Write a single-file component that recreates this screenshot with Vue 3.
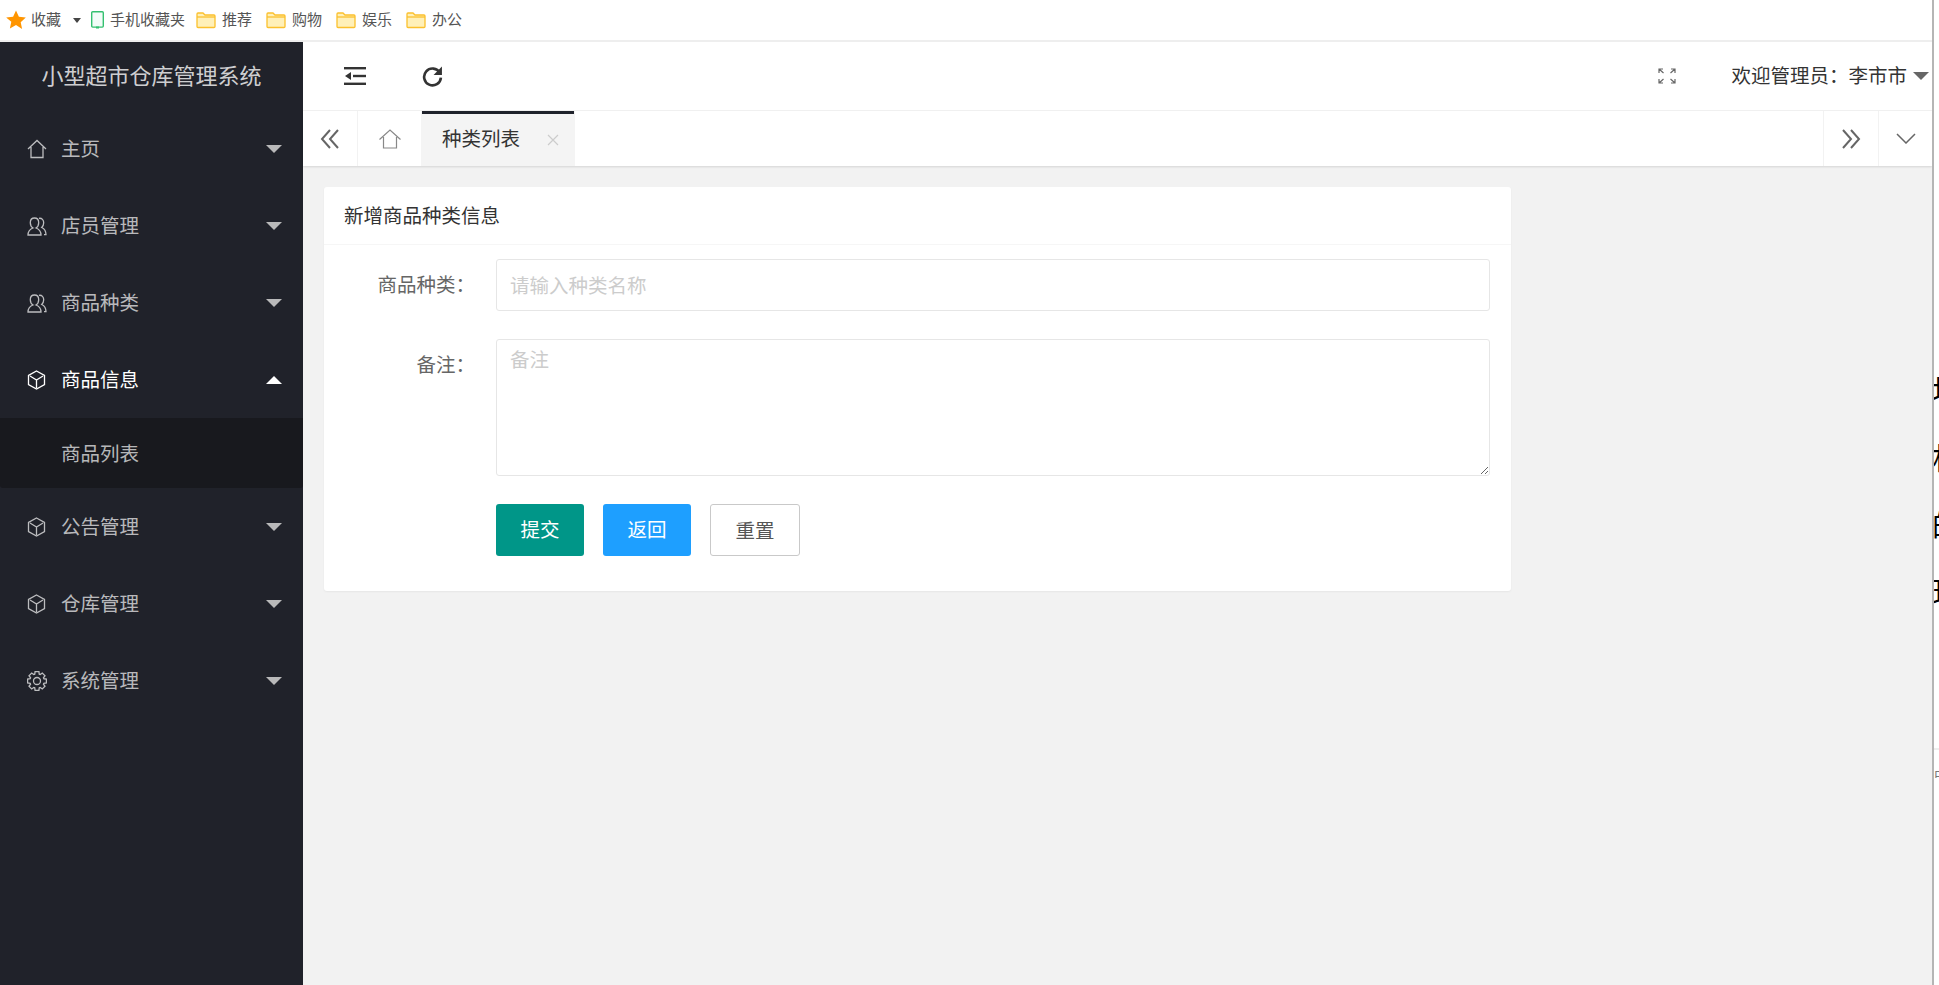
<script setup>
const bookmarks = ['推荐', '购物', '娱乐', '办公']
const menu = [
  { label: '主页', icon: 'home' },
  { label: '店员管理', icon: 'user' },
  { label: '商品种类', icon: 'user' },
  { label: '商品信息', icon: 'cube', open: true, sub: '商品列表' },
  { label: '公告管理', icon: 'cube' },
  { label: '仓库管理', icon: 'cube' },
  { label: '系统管理', icon: 'gear' }
]
const gearPoints = (() => {
  const pts = []
  for (let i = 0; i < 8; i++) {
    const a = (i * Math.PI) / 4
    for (const [d, r] of [[-0.32, 7.2], [-0.2, 9.6], [0.2, 9.6], [0.32, 7.2]]) {
      pts.push(`${(10 + r * Math.cos(a + d)).toFixed(2)},${(10 + r * Math.sin(a + d)).toFixed(2)}`)
    }
  }
  return pts.join(' ')
})()
const sliver = ['块', '相', '的', '现']
</script>

<template>
  <div class="screen">
    <div class="window">
      <div class="bookmarks">
        <svg class="star" viewBox="0 0 20 20"><path d="M10 0.5l2.9 6.3 6.9.8-5.1 4.7 1.4 6.8L10 15l-6.1 3.6 1.4-6.8L.2 7.6l6.9-.8z" fill="#ff9500"/></svg>
        <span class="bm-text bm-first">收藏</span>
        <i class="bm-caret"></i>
        <svg class="phone" viewBox="0 0 13 18"><rect x="0.7" y="0.7" width="11.6" height="15.4" rx="1" fill="#f2fcf8" stroke="#34c070" stroke-width="1.4"/><rect x="5" y="15.5" width="3" height="2" fill="#34c070"/></svg>
        <span class="bm-text">手机收藏夹</span>
        <span v-for="b in bookmarks" :key="b" class="bm-folder">
          <svg class="folder" viewBox="0 0 20 18"><path d="M1 3a1 1 0 0 1 1-1h5l2 2h9a1 1 0 0 1 1 1v10.500a1 1 0 0 1-1 1H2a1 1 0 0 1-1-1z" fill="#fff0b8" stroke="#fbc02d" stroke-width="1.300"/><path d="M1 6h18" stroke="#fbc02d" stroke-width="1.300"/></svg>
          <span class="bm-text">{{ b }}</span>
        </span>
      </div>

      <div class="app">
        <aside class="side">
          <div class="brand">小型超市仓库管理系统</div>
          <template v-for="m in menu" :key="m.label">
            <div class="item" :class="{ active: m.open }">
              <svg class="mi" viewBox="0 0 20 20" fill="none" stroke="currentColor" stroke-width="1.300">
                <path v-if="m.icon === 'home'" d="M1 10L10 1.500 19 10M4 8v10.500h12V8" />
                <template v-else-if="m.icon === 'user'">
                  <path d="M1 19c0-4 2.500-6 5-7-1.700-1-2.700-3-2.700-5.200C3.300 3.800 5 2 7.500 2s4.200 1.800 4.200 4.800c0 2.200-1 4.200-2.700 5.200 2.600 1 5 3 5 7z" />
                  <path d="M12 2.300c3-.4 4.700 1.700 4.700 4.500 0 2-.8 3.600-2 4.700 2.500 1.200 4.300 3.500 4.300 7.200h-2" />
                </template>
                <template v-else-if="m.icon === 'cube'">
                  <path d="M9.500 1l8 4.500v9l-8 4.500-8-4.500v-9z" />
                  <path d="M3 6l6.500 4 6.500-4M9.500 10v8" />
                </template>
                <template v-else>
                  <polygon :points="gearPoints" />
                  <circle cx="10" cy="10" r="3.500" />
                </template>
              </svg>
              <span class="ml">{{ m.label }}</span>
              <i class="caret" :class="{ up: m.open }"></i>
            </div>
            <div v-if="m.sub" class="sub">{{ m.sub }}</div>
          </template>
        </aside>

        <main class="main">
          <header class="top">
            <svg class="shrink" viewBox="0 0 22 18" fill="#333"><rect width="22" height="2.400"/><rect y="15.600" width="22" height="2.400"/><rect x="9" y="7.800" width="13" height="2.400"/><path d="M7 5v8L1 9z"/></svg>
            <svg class="refresh" viewBox="0 0 20 20" fill="none"><path d="M17 6.500A8 8 0 1 0 18 11" stroke="#333" stroke-width="2.500"/><path d="M19 0.500v8h-8z" fill="#333"/></svg>
            <svg class="full" viewBox="0 0 18 16" fill="none" stroke="#666" stroke-width="1.200"><path d="M1 5V1h4M1 1l4.500 4M17 5V1h-4M17 1l-4.500 4M1 11v4h4M1 15l4.500-4M17 11v4h-4M17 15l-4.500-4"/></svg>
            <span class="welcome">欢迎管理员：李市市</span>
            <i class="user-caret"></i>
          </header>

          <nav class="tabs">
            <div class="tb tb-left">
              <svg class="dbl" viewBox="0 0 20 20" fill="none" stroke="#666" stroke-width="2"><path d="M10 1L2 10l8 9M18 1l-8 9 8 9"/></svg>
            </div>
            <div class="tb-home">
              <svg class="tab-home" viewBox="0 0 22 20" fill="none" stroke="#888" stroke-width="1.200"><path d="M0.500 10.500L11 1l10.500 9.500M4.500 8v11h13V8"/></svg>
            </div>
            <div class="tab">
              <span class="tab-text">种类列表</span>
              <svg class="close" viewBox="0 0 12 12" stroke="#ccc" stroke-width="1.200"><path d="M1 1l10 10M11 1L1 11"/></svg>
            </div>
            <div class="tb tb-right">
              <svg class="dbl" viewBox="0 0 20 20" fill="none" stroke="#666" stroke-width="2"><path d="M2 1l8 9-8 9M10 1l8 9-8 9"/></svg>
            </div>
            <div class="tb tb-last">
              <svg class="down" viewBox="0 0 20 11" fill="none" stroke="#666" stroke-width="1.500"><path d="M1 1l9 9 9-9"/></svg>
            </div>
          </nav>

          <section class="content">
            <div class="card">
              <div class="card-head">新增商品种类信息</div>
              <form class="card-body" @submit.prevent>
                <div class="row">
                  <label class="lbl">商品种类：</label>
                  <input class="field" placeholder="请输入种类名称" />
                </div>
                <div class="row">
                  <label class="lbl lbl-area">备注：</label>
                  <textarea class="field area" placeholder="备注"></textarea>
                </div>
                <div class="row">
                  <span class="lbl"></span>
                  <div class="btns">
                    <button class="btn teal" type="button">提交</button>
                    <button class="btn blue" type="button">返回</button>
                    <button class="btn plain" type="reset">重置</button>
                  </div>
                </div>
              </form>
            </div>
          </section>
        </main>
      </div>
    </div>

    <div class="sliver">
      <div class="sl-chars">
        <span v-for="c in sliver" :key="c" class="sl-char">{{ c }}</span>
      </div>
      <div class="sl-small">中</div>
    </div>
  </div>
</template>

<style>
html, body { margin: 0; background: #fff; overflow: hidden; }
</style>

<style scoped>
* { box-sizing: border-box; }
.screen {
  display: flex;
  width: 1939px;
  height: 985px;
  overflow: hidden;
  font-family: "Noto Sans CJK SC", "Liberation Sans", sans-serif;
  background: #fff;
}
.window { width: 1932px; display: flex; flex-direction: column; flex: none; }

.bookmarks {
  height: 42px;
  flex: none;
  display: flex;
  align-items: center;
  border-bottom: 2px solid #eee;
  padding-left: 6px;
  color: #555;
}
.bm-text { font-size: 15px; line-height: 20px; padding-bottom: 2px; }
.star { width: 20px; height: 20px; }
.bm-first { margin-left: 5px; }
.bm-caret {
  width: 0; height: 0;
  margin: 0 10px 0 12px;
  border-left: 4.500px solid transparent;
  border-right: 4.500px solid transparent;
  border-top: 5px solid #444;
}
.phone { width: 13px; height: 18px; margin-right: 6px; }
.bm-folder { display: flex; align-items: center; margin-left: 14px; }
.bm-text + .bm-folder { margin-left: 11px; }
.folder { width: 20px; height: 18px; margin-right: 6px; }

.app { flex: 1; display: flex; min-height: 0; }
.side { width: 303px; flex: none; background: #20222a; color: rgba(255, 255, 255, .7); }
.brand {
  height: 68px;
  display: flex;
  align-items: center;
  justify-content: center;
  padding-bottom: 4px;
  font-size: 22px;
  color: rgba(255, 255, 255, .8);
}
.item {
  height: 77px;
  display: flex;
  align-items: center;
  padding: 0 21px 2px 27px;
  font-size: 19.500px;
}
.item.active { color: #fff; }
.mi { width: 20px; height: 20px; margin: 3px 14px 0 0; flex: none; }
.ml { flex: 1; }
.caret {
  width: 0; height: 0;
  border-left: 8px solid transparent;
  border-right: 8px solid transparent;
  border-top: 8px solid #b9b9ba;
  margin-top: 2px;
}
.caret.up { border-top: 0; border-bottom: 8px solid #fff; }
.sub {
  height: 70px;
  display: flex;
  align-items: center;
  padding: 0 0 2px 61px;
  background: #18191e;
  font-size: 19.500px;
  border-radius: 0 0 3px 3px;
}

.main { flex: 1; min-width: 0; display: flex; flex-direction: column; background: #f2f2f2; }
.top {
  height: 69px;
  flex: none;
  display: flex;
  align-items: center;
  background: #fff;
  border-bottom: 1px solid #f2f2f2;
  padding: 0 3px 0 41px;
  color: #333;
}
.shrink { width: 22px; height: 18px; }
.refresh { width: 21px; height: 21px; margin-left: 56px; }
.full { width: 18px; height: 16px; margin-left: auto; }
.welcome { font-size: 19.500px; margin: 0 0 4px 55px; white-space: nowrap; }
.user-caret {
  width: 0; height: 0;
  margin-left: 6px;
  border-left: 8px solid transparent;
  border-right: 8px solid transparent;
  border-top: 8px solid #666;
}

.tabs {
  height: 55px;
  flex: none;
  display: flex;
  background: #fff;
  box-shadow: 0 1px 2px rgba(0, 0, 0, .12);
  position: relative;
}
.tb { width: 55px; display: flex; align-items: center; justify-content: center; }
.tb-left { border-right: 1px solid #f2f2f2; }
.tb-right { margin-left: auto; border-left: 1px solid #f2f2f2; }
.tb-last { width: 54px; border-left: 1px solid #f2f2f2; }
.tb-home { width: 63px; display: flex; align-items: center; justify-content: center; }
.dbl { width: 20px; height: 20px; }
.tab-home { width: 22px; height: 20px; }
.down { width: 20px; height: 11px; }
.tab {
  width: 154px;
  position: relative;
  display: flex;
  align-items: center;
  padding-left: 21px;
  background: #f4f4f4;
  font-size: 19.500px;
  color: #333;
}
.tab::after {
  content: "";
  position: absolute;
  left: 1px; right: 1px; top: 0;
  height: 3px;
  background: #1f222b;
}
.tab-text { margin-bottom: 2px; }
.close { width: 12px; height: 12px; margin-left: 27px; margin-top: 3px; }

.content { flex: 1; padding: 21px; }
.card {
  width: 1187px;
  background: #fff;
  border-radius: 3px;
  box-shadow: 0 1px 2px rgba(0, 0, 0, .05);
}
.card-head {
  height: 58px;
  display: flex;
  align-items: center;
  padding: 0 0 2px 20px;
  border-bottom: 1px solid #f6f6f6;
  font-size: 19.500px;
  color: #333;
}
.card-body { padding: 14px 21px 35px 0; display: flex; flex-direction: column; gap: 28px; }
.row { display: flex; align-items: flex-start; }
.lbl {
  width: 172px;
  flex: none;
  padding-right: 21px;
  text-align: right;
  font-size: 19.500px;
  line-height: 50px;
  color: #666;
  white-space: nowrap;
}
.field {
  flex: 1;
  min-width: 0;
  height: 52px;
  border: 1px solid #e6e6e6;
  border-radius: 3px;
  padding: 0 13px 2px;
  font: inherit;
  font-size: 19.500px;
  color: #333;
  background: #fff;
  outline: none;
}
.field::placeholder { color: #ccc; opacity: 1; }
.area { height: 137px; padding: 3px 13px 0; line-height: 32px; display: block; }
.btns { display: flex; gap: 19px; }
.btn {
  width: 88px;
  height: 52px;
  border: 0;
  border-radius: 3px;
  font: inherit;
  font-size: 19.500px;
  color: #fff;
  padding: 0 0 3px;
}
.teal { background: #009688; }
.blue { background: #1e9fff; }
.plain { width: 90px; background: #fff; border: 1px solid #c9c9c9; color: #555; padding-bottom: 2px; }

.sliver {
  flex: 1;
  min-width: 0;
  border-left: 2px solid #b5b5b5;
  position: relative;
  overflow: hidden;
  background: #fff;
}
.sl-chars { margin-top: 356px; display: flex; flex-direction: column; }
.sl-char { height: 67px; line-height: 67px; font-size: 30px; margin-left: -2px; color: #000; white-space: nowrap; }
.sl-small { margin-top: 124px; border-top: 2px solid #eee; font-size: 14px; padding-top: 14px; color: #777; white-space: nowrap; }
</style>
